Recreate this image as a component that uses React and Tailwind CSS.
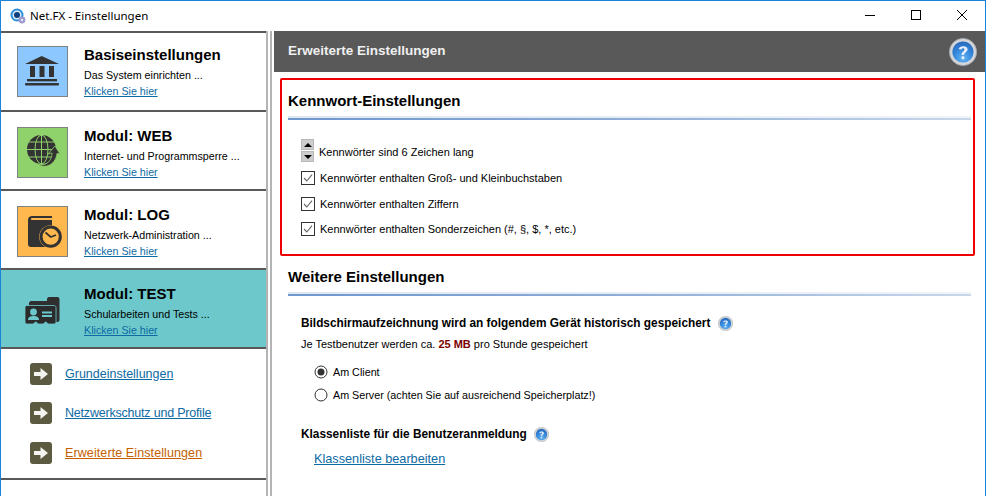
const HelpIcon = ({ size, id }) => (
  <svg width={size} height={size} viewBox="0 0 28 28" className="shrink-0">
    <defs>
      <radialGradient id={id} cx="50%" cy="80%" r="75%">
        <stop offset="0%" stopColor="#63b4f4" />
        <stop offset="60%" stopColor="#3286da" />
        <stop offset="100%" stopColor="#2a6cc0" />
      </radialGradient>
    </defs>
    <circle cx="14" cy="14" r="13.6" fill="#d3d5d8" stroke="#a4a9af" strokeWidth="0.8" />
    <circle cx="14" cy="14" r="10.6" fill={`url(#${id})`} />
    <path d="M9.6 11 C9.8 7.6 18.6 6.8 18.6 11.2 C18.6 14.2 15.2 14 15.2 17 H12.6 C12.4 13.4 15.4 13.4 15.4 11.4 C15.4 9.8 12.8 10 12.4 11.6 Z" fill="#e8ecfa" />
    <rect x="12.5" y="18.3" width="2.9" height="2.9" rx="0.6" fill="#e8ecfa" />
  </svg>
);

const BankIcon = () => (
  <svg width="49" height="49" viewBox="1 1 49 49" fill="#333">
    <path d="M24.7 10 8 18 H42 Z" />
    <rect x="13" y="20" width="5" height="11" />
    <rect x="22.5" y="20" width="5" height="11" />
    <rect x="32" y="20" width="5" height="11" />
    <rect x="10" y="33" width="30" height="2.4" />
    <rect x="8" y="37" width="34" height="2.4" rx="1" />
  </svg>
);

const GlobeIcon = () => (
  <svg width="49" height="49" viewBox="1 1 49 49">
    <circle cx="24.5" cy="22.5" r="14.5" fill="#333" />
    <g stroke="#8fd16a" strokeWidth="1" fill="none">
      <ellipse cx="24.5" cy="22.5" rx="6.5" ry="14.5" />
      <path d="M24.5 8 V37 M10 22.5 H39 M12 15 H37 M12 30 H37" />
    </g>
    <path d="M20 37 C30 40 35 33 35 26 L31 27 L38 19 L43 27 L40 26.5 C39 36 30 43 20 37 Z" fill="#333" stroke="#8fd16a" strokeWidth="0.8" />
  </svg>
);

const LogIcon = () => (
  <svg width="49" height="49" viewBox="1 1 49 49">
    <path d="M11 14 C11 11 13 10 15 10 H35 V12 H15 C13.5 12 13.5 14 15 14 H35 V41 H14 C12 41 11 40 11 38 Z" fill="#333" />
    <circle cx="33.7" cy="30.7" r="11.5" fill="#ffb84d" />
    <circle cx="33.7" cy="30.7" r="9.6" fill="none" stroke="#333" strokeWidth="3" />
    <path d="M28.5 26.5 L33.7 31 L39 29" fill="none" stroke="#333" strokeWidth="1.8" />
  </svg>
);

const CardIcon = () => (
  <svg width="49" height="49" viewBox="1 1 49 49">
    <path transform="translate(2 3)" d="M10 19 V15 C10 14 11 13 12 13 H28 V11 C28 10 29 9 30 9 H38.5 C39.5 9 40.5 10 40.5 11 V32 C40.5 33 39.5 34 38.5 34 H34 V19 Z" fill="#2f2f30" />
    <g transform="translate(1 5)">
      <path d="M9 15.5 H36 C37 15.5 38 16.5 38 17.5 V32 C38 33 37 34 36 34 H30 C29 31.5 26.5 31.5 25.5 34 H20 C19 31.5 16.5 31.5 15.5 34 H9 C8 34 7 33 7 32 V17.5 C7 16.5 8 15.5 9 15.5 Z" fill="#2b2b2c" stroke="#6cc8cb" strokeWidth="0.8" />
      <circle cx="15.5" cy="22" r="3.4" fill="#6cc8cb" />
      <path d="M10 30 C10 26.5 13 26 15.5 26 C18 26 21 26.5 21 30 Z" fill="#6cc8cb" />
      <rect x="24" y="21.5" width="10" height="2" fill="#6cc8cb" />
      <rect x="24" y="25" width="10" height="2" fill="#6cc8cb" />
    </g>
  </svg>
);

const modules = [
  { title: "Basiseinstellungen", sub: "Das System einrichten ...", box: "bg-[#8cc8ff] border-[#7d8287]", icon: <BankIcon />, pad: "pt-[13px]" },
  { title: "Modul: WEB", sub: "Internet- und Programmsperre ...", box: "bg-[#8fd16a] border-[#7d8287]", icon: <GlobeIcon />, pad: "pt-[15px]" },
  { title: "Modul: LOG", sub: "Netzwerk-Administration ...", box: "bg-[#ffb84d] border-[#7d8287]", icon: <LogIcon />, pad: "pt-[15px]" },
  { title: "Modul: TEST", sub: "Schularbeiten und Tests ...", box: "border-transparent", icon: <CardIcon />, active: true, pad: "pt-[15px]" },
];

const ModuleItem = ({ m }) => (
  <div className={`h-[79px] border-b-2 border-[#595959] pl-4 flex items-start gap-[16px] ${m.pad} ${m.active ? "bg-[#6cc8cb]" : "bg-white"}`}>
    <div className={`w-[51px] h-[51px] border shrink-0 ${m.box}`}>{m.icon}</div>
    <div className="flex flex-col">
      <div className="text-[15px] leading-[18px] font-bold text-black">{m.title}</div>
      <div className="text-[10.7px] leading-[14px] text-black mt-[4px]">{m.sub}</div>
      <a className="text-[10.7px] leading-[14px] underline text-[#0e6aa3] mt-[2px]">Klicken Sie hier</a>
    </div>
  </div>
);

const ArrowBox = () => (
  <svg width="22" height="22" viewBox="0 0 22 22" className="shrink-0">
    <rect x="0" y="0" width="22" height="22" rx="3" fill="#5c5a40" />
    <path d="M4 9 H10.5 V5 L18 11 L10.5 17 V13 H4 Z" fill="#f4f4f0" />
  </svg>
);

const SubItem = ({ label, active, className, textClass }) => (
  <div className={`flex items-center gap-[13px] pl-[29px] ${className}`}>
    <ArrowBox />
    <a className={`text-[12.5px] leading-[16px] underline ${textClass} ${active ? "text-[#c46000]" : "text-[#0e6aa3]"}`}>{label}</a>
  </div>
);

const SectionHead = ({ children }) => (
  <div>
    <div className="text-[15px] leading-[18px] font-bold text-black">{children}</div>
    <div className="h-[2px] mt-[6px] bg-gradient-to-r from-[#dfe7f3] to-[#f0f3f8]" />
    <div className="h-[2px] bg-gradient-to-r from-[#6f98cc] via-[#8fadd6] to-[#c8d8ea]" />
  </div>
);

const Check = ({ label, className }) => (
  <div className={`flex items-center gap-[5px] h-[14px] ${className}`}>
    <svg width="14" height="14" viewBox="0 0 14 14" className="shrink-0">
      <rect x="0.5" y="0.5" width="13" height="13" fill="#fff" stroke="#333" />
      <path d="M3 7 L5.8 10 L11 3.6" fill="none" stroke="#666" strokeWidth="1.1" />
    </svg>
    <span className="text-[11px] leading-[14px] text-black">{label}</span>
  </div>
);

const Radio = ({ label, on }) => (
  <div className="flex items-center gap-[5px] h-[14px]">
    <svg width="14" height="14" viewBox="0 0 14 14" className="shrink-0">
      <circle cx="7" cy="7" r="6" fill="#fff" stroke="#333" />
      {on && <circle cx="7" cy="7" r="3.5" fill="#333" />}
    </svg>
    <span className="text-[10.75px] leading-[14px] text-black">{label}</span>
  </div>
);

export default function App() {
  return (
    <div className="w-[986px] h-[496px] overflow-hidden bg-white border-x border-t border-[#1883d7] flex flex-col font-['Liberation_Sans',Arial,sans-serif]">
      {/* title bar */}
      <div className="h-[30px] shrink-0 flex items-center bg-white pl-[9px]">
        <svg width="16" height="16" viewBox="0 0 16 16" className="shrink-0">
          <circle cx="7" cy="7" r="6.5" fill="#2f8fd8" />
          <circle cx="7" cy="7" r="4.5" fill="#d8eefb" />
          <circle cx="7" cy="7" r="3" fill="#0f3f7a" />
          <circle cx="12" cy="12" r="3.4" fill="#9a9ad0" />
          <circle cx="12" cy="12" r="1.2" fill="#e8e8f6" />
        </svg>
        <span className="ml-[4px] text-[11.5px] font-['Noto_Sans',sans-serif] text-black">Net.FX - Einstellungen</span>
        <div className="ml-auto flex items-center">
          <svg width="46" height="30" viewBox="0 0 46 30"><path d="M18 14.5 H28" stroke="#000" strokeWidth="1" /></svg>
          <svg width="46" height="30" viewBox="0 0 46 30"><rect x="18.5" y="9.5" width="9" height="9" fill="none" stroke="#000" strokeWidth="1" /></svg>
          <svg width="46" height="30" viewBox="0 0 46 30"><path d="M18 9 L28 19 M28 9 L18 19" stroke="#000" strokeWidth="1" /></svg>
        </div>
      </div>
      {/* body */}
      <div className="flex flex-1 min-h-0">
        {/* left panel */}
        <div className="w-[267px] shrink-0 border-r-2 border-[#b4b4b4] flex flex-col">
          <div className="h-[2px] bg-[#595959]" />
          {modules.map((m) => <ModuleItem key={m.title} m={m} />)}
          <div className="h-[131px] border-b-2 border-[#595959] flex flex-col pt-[14px]">
            <SubItem label="Grundeinstellungen" />
            <SubItem label="Netzwerkschutz und Profile" className="mt-[17px]" textClass="tracking-[-0.2px]" />
            <SubItem label="Erweiterte Einstellungen" active className="mt-[18px]" textClass="tracking-[0.1px]" />
          </div>
        </div>
        {/* splitter */}
        <div className="w-[4px] shrink-0 bg-white border-r-2 border-[#b4b4b4] ml-0" />
        <div className="w-[2px] shrink-0 bg-white" />
        {/* right panel */}
        <div className="flex-1 min-w-0 flex flex-col">
          <div className="h-[41px] shrink-0 bg-[#595959] flex items-center justify-between pl-[14px] pr-[8px]">
            <span className="text-[13.5px] font-bold text-[#f0f0f0]">Erweiterte Einstellungen</span>
            <HelpIcon size={28} id="helpBig" />
          </div>
          <div className="mt-[6px] ml-[6px] mr-[10px] h-[178px] shrink-0 border-2 border-[#f00000] rounded-[2px] pl-[6px] pr-[2px] pt-[12px]">
            <SectionHead>Kennwort-Einstellungen</SectionHead>
            <div className="pl-[13px] mt-[19px] flex flex-col">
              <div className="flex items-center gap-[5px]">
                <div className="flex flex-col gap-px w-[13px] shrink-0">
                  <div className="h-[11px] bg-[#cdcdcd] border border-[#b8b8b8] flex items-center justify-center">
                    <div className="w-0 h-0 border-x-[4px] border-x-transparent border-b-[4px] border-b-black" />
                  </div>
                  <div className="h-[11px] bg-[#cdcdcd] border border-[#b8b8b8] flex items-center justify-center">
                    <div className="w-0 h-0 border-x-[4px] border-x-transparent border-t-[4px] border-t-black" />
                  </div>
                </div>
                <span className="text-[11px] leading-[14px] text-black mt-[2px]">Kennwörter sind 6 Zeichen lang</span>
              </div>
              <div className="flex flex-col mt-[9px]">
                <Check label="Kennwörter enthalten Groß- und Kleinbuchstaben" />
                <Check label="Kennwörter enthalten Ziffern" className="mt-[12px]" />
                <Check label="Kennwörter enthalten Sonderzeichen (#, §, $, *, etc.)" className="mt-[11px]" />
              </div>
            </div>
          </div>
          <div className="ml-[14px] mr-[14px] mt-[12px]">
            <SectionHead>Weitere Einstellungen</SectionHead>
            <div className="pl-[13px] mt-[19px]">
              <div className="flex items-center gap-[8px]">
                <span className="text-[11.85px] leading-[16px] font-bold text-black">Bildschirmaufzeichnung wird an folgendem Gerät historisch gespeichert</span>
                <HelpIcon size={15} id="helpA" />
              </div>
              <div className="text-[11px] leading-[14px] text-black mt-[6px]">
                Je Testbenutzer werden ca. <b className="text-[#7a0000]">25 MB</b> pro Stunde gespeichert
              </div>
              <div className="pl-[13px] mt-[14px] flex flex-col gap-[9px]">
                <Radio label="Am Client" on />
                <Radio label="Am Server (achten Sie auf ausreichend Speicherplatz!)" />
              </div>
              <div className="flex items-center gap-[7px] mt-[24px]">
                <span className="text-[11.85px] leading-[16px] font-bold text-black">Klassenliste für die Benutzeranmeldung</span>
                <HelpIcon size={15} id="helpB" />
              </div>
              <a className="block ml-[13px] mt-[9px] text-[12.7px] leading-[16px] underline text-[#0e6aa3]">Klassenliste bearbeiten</a>
            </div>
          </div>
        </div>
      </div>
    </div>
  );
}
